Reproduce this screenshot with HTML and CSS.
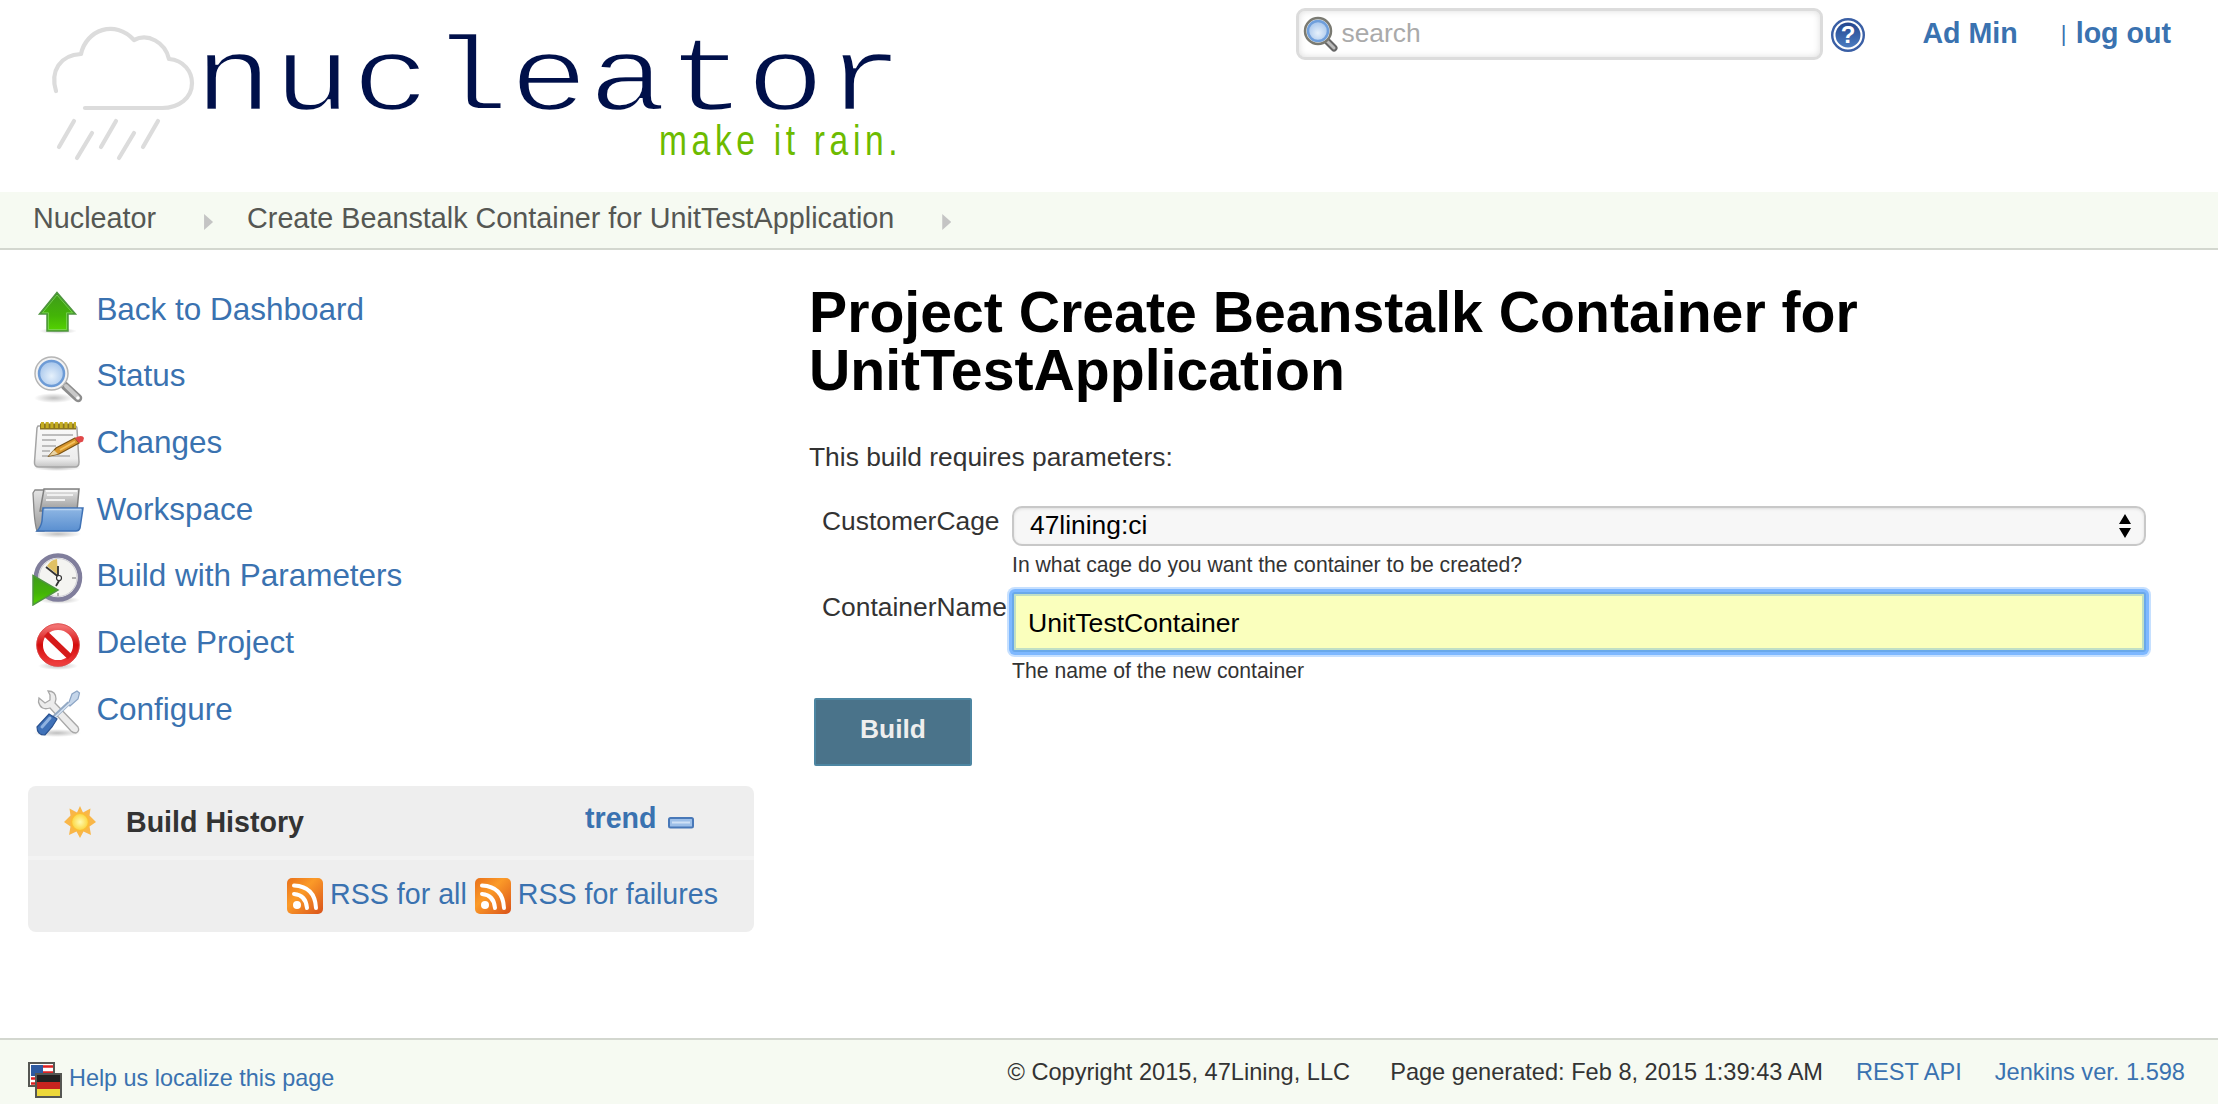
FILE: index.html
```html
<!DOCTYPE html>
<html lang="en">
<head>
<meta charset="utf-8">
<title>Create Beanstalk Container for UnitTestApplication [Nucleator]</title>
<link rel="stylesheet" href="styles.css">
</head>
<body>
<svg class="defs" width="0" height="0" aria-hidden="true">
  <defs>
    <linearGradient id="green" x1="0" y1="0" x2="0" y2="1"><stop offset="0" stop-color="#3f9a1c"/><stop offset=".6" stop-color="#43b407"/><stop offset="1" stop-color="#55d400"/></linearGradient>
    <radialGradient id="lens" cx=".5" cy=".6" r=".6"><stop offset="0" stop-color="#e6f1fc"/><stop offset="1" stop-color="#a3c3ea"/></radialGradient>
    <linearGradient id="paper" x1="0" y1="0" x2="0" y2="1"><stop offset="0" stop-color="#fafafa"/><stop offset=".8" stop-color="#ededed"/><stop offset="1" stop-color="#c4c4c4"/></linearGradient>
    <linearGradient id="folder" x1="0" y1="0" x2="0" y2="1"><stop offset="0" stop-color="#8fb7e4"/><stop offset="1" stop-color="#5a8fd0"/></linearGradient>
    <linearGradient id="grey" x1="0" y1="0" x2="0" y2="1"><stop offset="0" stop-color="#e4e4e4"/><stop offset="1" stop-color="#9a9a9a"/></linearGradient>
    <linearGradient id="red" x1="0" y1="0" x2="0" y2="1"><stop offset="0" stop-color="#f27070"/><stop offset=".5" stop-color="#d40c0c"/><stop offset="1" stop-color="#ee3c3c"/></linearGradient>
    <linearGradient id="rss" x1="0" y1="0" x2="1" y2="1"><stop offset="0" stop-color="#e8701a"/><stop offset=".4" stop-color="#fb9a28"/><stop offset="1" stop-color="#d9521a"/></linearGradient>
    <radialGradient id="sun"><stop offset="0" stop-color="#fffbb0"/><stop offset="1" stop-color="#fbd43c"/></radialGradient>
    <radialGradient id="shade"><stop offset="0" stop-color="#000" stop-opacity=".25"/><stop offset="1" stop-color="#000" stop-opacity="0"/></radialGradient>
    <linearGradient id="blue" x1="0" y1="0" x2="0" y2="1"><stop offset="0" stop-color="#23468f"/><stop offset="1" stop-color="#4b7cc0"/></linearGradient>
    <symbol id="feed" viewBox="0 0 36 36">
      <rect width="36" height="36" rx="5" fill="url(#rss)"/>
      <circle cx="10" cy="27" r="4" fill="#fff"/>
      <path d="M7 16q12 1 13 14M7 7.500q21 1 22 22.500" fill="none" stroke="#fff" stroke-width="4" stroke-linecap="round"/>
    </symbol>
  </defs>
</svg>

<header class="header">
  <svg class="logo" width="920" height="192" viewBox="0 0 920 192">
    <g fill="none" stroke="#dcdcdc" stroke-width="4.200" stroke-linecap="round" stroke-linejoin="round">
      <path d="M56 91C50 71 60 55 81 54C86 30 115 19 134 40C148 33 165 42 169 59C184 60 192 72 192 83C192 98 179 108 162 108H85"/>
      <path d="M74 121L59 147M116 121L101 147M158 121L143 147M92 133L77 158M134 133L119 158"/>
    </g>
    <text class="logo-name" transform="translate(194 110) scale(1.240 1)">nucleator</text>
    <text class="logo-tag" transform="translate(659 155) scale(.780 1)" textLength="306">make it rain.</text>
  </svg>
  <div class="tools">
    <div class="search">
      <svg width="36" height="36" viewBox="0 0 36 36">
        <path d="M23 24l8 8" stroke="#666" stroke-width="7" stroke-linecap="round"/>
        <path d="M24 25l7 7" stroke="#bbb" stroke-width="3" stroke-linecap="round"/>
        <circle cx="15" cy="15" r="13" fill="#e8e8e2" stroke="#7a7a72" stroke-width="2.500"/>
        <circle cx="15" cy="15" r="10" fill="url(#lens)" stroke="#6f9fdc" stroke-width="2.500"/>
      </svg>
      <span>search</span>
    </div>
    <svg class="help" width="34" height="34" viewBox="0 0 34 34">
      <circle cx="17" cy="17" r="15.800" fill="#fff" stroke="#3a5fa5" stroke-width="2.400"/>
      <circle cx="17" cy="17" r="12.500" fill="url(#blue)"/>
      <text class="help-mark" x="17" y="25">?</text>
    </svg>
    <a class="user">Ad Min</a>
    <a class="logout"><span class="bar">|</span> log out</a>
  </div>
</header>

<nav class="crumbs">
  <a class="crumb-home">Nucleator</a>
  <i class="sep"></i>
  <a class="crumb-job">Create Beanstalk Container for UnitTestApplication</a>
  <i class="sep"></i>
</nav>

<div class="page">
  <aside class="side">
    <ul class="tasks">
      <li><svg class="ico" viewBox="0 0 52 54"><ellipse cx="26" cy="46" rx="19" ry="3" fill="url(#shade)"/><path d="M25 7.500L43.500 29H36V46H15V29H7.500Z" fill="url(#green)" stroke="#4f9440" stroke-width="1.500"/><path d="M25 10L40.500 27.800H34.500V44.500H16.500V27.800H10.500Z" fill="none" stroke="#86d968" stroke-width="1" opacity=".7"/></svg><a>Back to Dashboard</a></li>
      <li><svg class="ico" viewBox="0 0 52 54"><ellipse cx="22" cy="46" rx="20" ry="5" fill="url(#shade)"/><path d="M33 34l13 12" stroke="#8d8d8d" stroke-width="8.500" stroke-linecap="round"/><path d="M34 34l11.500 11" stroke="#c9c9c9" stroke-width="4" stroke-linecap="round"/><circle cx="46" cy="46" r="1.800" fill="#fff"/><circle cx="19.500" cy="21.500" r="16.500" fill="#f3f3f3" stroke="#b5b5b5" stroke-width="1.500"/><circle cx="19.500" cy="21.500" r="12.500" fill="url(#lens)" stroke="#6d9bd6" stroke-width="2.500"/></svg><a>Status</a></li>
      <li><svg class="ico" viewBox="0 0 52 54"><ellipse cx="25" cy="49" rx="24" ry="3" fill="url(#shade)"/><path d="M6 7H43Q45 7 45 10L47 43Q47 48 43 48H7Q2 48 2.500 43L5 9Z" fill="url(#paper)" stroke="#a5a5a5" stroke-width="1.500"/><path d="M8 7.500H44" stroke="#8a7420" stroke-width="6"/><path d="M9 6H44" stroke="#c4ad22" stroke-width="6" stroke-dasharray="3 1.700"/><path d="M10 16H41M10 21H24M10 27H24M10 32H18M10 37H38" stroke="#bdbdbd" stroke-width="1.800"/><path d="M17 37L24 29L43 19L47 24L27 35Z" fill="#d9962b" stroke="#7a5314" stroke-width="1.200"/><path d="M17 37L22 31L26 35Z" fill="#e9d3a4"/><path d="M28 31L43 22.500" stroke="#f3c35f" stroke-width="2"/><path d="M43 19L46 17.500Q51 16 52 19L51 22.500L47 24Z" fill="#e14848"/></svg><a>Changes</a></li>
      <li><svg class="ico" viewBox="0 0 52 54"><ellipse cx="26" cy="49" rx="23" ry="4" fill="url(#shade)"/><path d="M1 8L3 5H12V46H5Q3 40 2 26Z" fill="url(#grey)" stroke="#888" stroke-width="1.300"/><path d="M12 4H47L45 26H8Z" fill="url(#grey)" stroke="#808080" stroke-width="1.500"/><path d="M14 6H45" stroke="#fff" stroke-width="1.500"/><path d="M15 10H41M14 15H33" stroke="#f0f0f0" stroke-width="2"/><path d="M11 23H51L48 43Q47 46 44 46H5Q9 42 10 36Z" fill="url(#folder)" stroke="#3f72b5" stroke-width="1.500"/><path d="M12.500 24.500H49" stroke="#b7d3f2" stroke-width="1.500"/></svg><a>Workspace</a></li>
      <li><svg class="ico" viewBox="0 0 52 54"><ellipse cx="27" cy="48" rx="21" ry="4" fill="url(#shade)"/><circle cx="26" cy="25.500" r="22" fill="#f4f4f1" stroke="#807e9c" stroke-width="4.500"/><circle cx="26" cy="25.500" r="19" fill="none" stroke="#cfcfd6" stroke-width="1"/><path d="M26 23L15 14Q19 7.500 25 7Z" fill="#e0c164"/><path d="M14 15L26 24.500L28 27L24 34M26 24V14" fill="none" stroke="#333" stroke-width="1.800"/><circle cx="27" cy="26" r="2.500" fill="#fff" stroke="#333" stroke-width="1.200"/><path d="M40 26h4M26 41v3" stroke="#999" stroke-width="1.500"/><path d="M1 23.500L26 38L1 53Z" fill="url(#green)" stroke="#4f9440" stroke-width="1.500"/></svg><a>Build with Parameters</a></li>
      <li><svg class="ico" viewBox="0 0 52 54"><ellipse cx="26" cy="47" rx="20" ry="4" fill="url(#shade)"/><circle cx="26" cy="26" r="18.300" fill="#fff" stroke="url(#red)" stroke-width="6.500"/><path d="M14 15L38 38" stroke="#d61a1a" stroke-width="6"/><circle cx="26" cy="26" r="21.300" fill="none" stroke="#d84a4a" stroke-width=".8"/></svg><a>Delete Project</a></li>
      <li><svg class="ico" viewBox="0 0 52 54"><ellipse cx="25" cy="48" rx="24" ry="4" fill="url(#shade)"/><path d="M16 6Q24 6 24 14L23 18L46 42Q48 46 44 48Q41 48 39 46L18 23Q9 26 6.500 17L7 13L13 18L18 15L18 10Z" fill="#ececec" stroke="#a8a8a8" stroke-width="1.300"/><path d="M36 20L40 9L45 6L47.500 8L46 14L38 21Z" fill="#c5d6ea" stroke="#8ba4c4" stroke-width="1.200"/><path d="M21 33L37 18" stroke="#93a9c4" stroke-width="4"/><path d="M22 33L38 18" stroke="#d8e4f2" stroke-width="1.500"/><path d="M5 42L17 29L25 34L20 42L13 50Q5 50 5 42Z" fill="#3f71b8" stroke="#2a5290" stroke-width="1.200"/><path d="M10 42L18 33" stroke="#8fb2e0" stroke-width="3" stroke-linecap="round"/></svg><a>Configure</a></li>
    </ul>
    <section class="history">
      <div class="history-head">
        <svg class="sun" width="34" height="34" viewBox="0 0 34 34"><path d="M17 1L20 7.500L27.500 3.500L26.500 10.500L33 17L26.500 21.500L28 30L20.500 26.500L17 33L13.500 26.500L6 30L7.500 21.500L1 17L7.500 10.500L6.500 3.500L14 7.500Z" fill="#f9b648"/><circle cx="17" cy="17" r="8.700" fill="url(#sun)" stroke="#fbbc35" stroke-width="1.600"/></svg>
        <h2>Build History</h2>
        <a class="trend">trend</a>
        <svg class="minus" width="26" height="12" viewBox="0 0 26 12"><rect x="1" y="1" width="24" height="9.500" rx="1.500" fill="#9dbfe8" stroke="#4878b8" stroke-width="2"/><path d="M4 5.500H22" stroke="#cfe1f6" stroke-width="2"/></svg>
      </div>
      <div class="history-feed">
        <svg width="36" height="36"><use href="#feed"/></svg><a class="all">RSS for all</a>
        <svg width="36" height="36"><use href="#feed"/></svg><a>RSS for failures</a>
      </div>
    </section>
  </aside>

  <main class="main">
    <h1>Project Create Beanstalk Container for<br>UnitTestApplication</h1>
    <p class="intro">This build requires parameters:</p>
    <div class="param">
      <label>CustomerCage</label>
      <div class="field">
        <div class="select"><span>47lining:ci</span><svg width="12" height="24" viewBox="0 0 12 24"><path d="M6 0L12 10H0ZM6 24L12 14H0Z"/></svg></div>
        <p class="hint">In what cage do you want the container to be created?</p>
      </div>
    </div>
    <div class="param second">
      <label>ContainerName</label>
      <div class="field">
        <div class="input">UnitTestContainer</div>
        <p class="hint">The name of the new container</p>
      </div>
    </div>
    <button class="build">Build</button>
  </main>
</div>

<footer class="footer">
  <svg class="flags" width="34" height="36" viewBox="0 0 34 36">
    <rect x="1" y="1" width="25" height="23" fill="#fff" stroke="#555753" stroke-width="2"/>
    <path d="M3 4.500H25M3 10.500H25M3 16.500H25M3 21.500H25" stroke="#d22" stroke-width="2.500"/>
    <rect x="3" y="3" width="12" height="11" fill="#2d5aa0"/>
    <rect x="8" y="12" width="25" height="23" fill="#222" stroke="#555753" stroke-width="2"/>
    <rect x="9" y="20" width="23" height="7" fill="#c9241f"/>
    <rect x="9" y="27" width="23" height="7" fill="#edd83a"/>
  </svg>
  <a class="localize">Help us localize this page</a>
  <div class="legal">
    <span>© Copyright 2015, 47Lining, LLC</span>
    <span class="generated">Page generated: Feb 8, 2015 1:39:43 AM</span>
    <a class="api">REST API</a>
    <a>Jenkins ver. 1.598</a>
  </div>
</footer>
</body>
</html>
```
FILE: styles.css
```css
* { box-sizing: border-box; }
body {
  margin: 0;
  height: 1104px;
  display: flex;
  flex-direction: column;
  background: #fff;
  color: #333;
  font-family: "Liberation Sans", Arial, sans-serif;
  font-size: 26.4px;
  white-space: nowrap;
  overflow: hidden;
}
a { color: #3a72b0; text-decoration: none; }
h1, h2, p, ul { margin: 0; padding: 0; }
svg { display: block; flex: none; }
.defs { position: absolute; }

/* Header */
.header { display: flex; justify-content: space-between; height: 192px; flex: none; }
.logo-name { font-family: "Liberation Mono", "Courier New", monospace; font-size: 106px; fill: #00104a; stroke: #fff; stroke-width: 2.500px; }
.logo-tag { font-size: 43px; fill: #6dbb00; }
.tools { display: flex; align-items: flex-start; padding: 8px 47px 0 0; font-size: 28.6px; font-weight: bold; line-height: 50px; }
.search {
  display: flex;
  align-items: center;
  width: 527px;
  height: 52px;
  padding-left: 4px;
  border: 3px solid #dcdcdc;
  border-radius: 9px;
  box-shadow: inset 0 0 7px #ddd;
  color: #aaa;
  font-size: 26.4px;
  font-weight: normal;
}
.search span { line-height: 46px; margin: -2px 0 0 2px; }
.help { margin: 10px 0 0 8px; }
.help-mark { fill: #fff; font-size: 24px; font-weight: bold; text-anchor: middle; }
.user { margin-left: 57px; }
.logout { margin-left: 43px; }
.bar { display: inline-block; font-size: 22px; font-weight: normal; width: 6px; vertical-align: 2px; line-height: 1; margin-right: 1px; }

/* Breadcrumbs */
.crumbs {
  display: flex;
  flex: none;
  height: 58px;
  padding-left: 33px;
  background: #f6faf2;
  border-bottom: 2px solid #d3d7cf;
  font-size: 28.75px;
  line-height: 52px;
}
.crumbs a { color: #555753; }
.sep { width: 9px; height: 16px; margin: 22px 34px 0 48px; background: #c4c4c4; clip-path: polygon(0 0, 100% 50%, 0 100%); }

/* Body columns */
.page { display: flex; flex: 1; }
.side { width: 754px; padding: 26px 0 0 28px; flex: none; }
.tasks { list-style: none; font-size: 31.46px; }
.tasks li { display: flex; align-items: center; height: 66.67px; padding-left: 4px; line-height: 67px; }
.ico { width: 52px; height: 54px; margin: 6px 12.4px 0 0; }
.history { margin-top: 43px; background: #eee; border-radius: 8px; font-size: 28.6px; }
.history-head { display: flex; height: 74px; padding-left: 35px; border-bottom: 4px solid #f3f3f3; line-height: 72px; }
.sun { margin-top: 19px; }
.history h2 { width: 459px; margin-left: 29px; font-size: 28.6px; color: #333; }
.trend { font-weight: bold; line-height: 64px; }
.minus { margin: 31px 0 0 12px; }
.history-feed { display: flex; justify-content: flex-end; height: 72px; padding: 0 36px 0 0; line-height: 68px; }
.history-feed svg { margin: 18px 7px 0 0; }
.history-feed .all { margin-right: 8px; }

/* Main */
.main { flex: 1; padding: 33px 72px 0 55px; }
h1 { color: #000; font-size: 57.2px; line-height: 58px; }
.intro { margin-top: 35px; line-height: 46px; }
.param { display: flex; margin: 26px 0 0 -1px; }
.param label { width: 204px; padding-left: 14px; line-height: 30px; }
.field { flex: 1; min-width: 0; }
.select {
  display: flex;
  align-items: center;
  justify-content: space-between;
  height: 40px;
  padding: 0 13px 0 16px;
  border: 2px solid #c8c8c8;
  border-radius: 10px;
  background: #f7f7f7;
  box-shadow: inset 0 1px 3px #ddd;
  color: #000;
  line-height: 34px;
}
.select span { margin-top: -2px; }
.hint { font-size: 21.2px; line-height: 38px; }
.second { margin-top: 8px; }
.input {
  height: 60px;
  padding-left: 14px;
  border: 2px solid #6aa9ea;
  border-radius: 3px;
  background: #faffbd;
  box-shadow: inset 0 0 0 2px #c0dfc5, 0 0 0 3px #7eb8ff, 0 0 0 5px #c6e0ff;
  color: #000;
  font-size: 26.6px;
  line-height: 58px;
}
.build {
  display: block;
  width: 158px;
  height: 68px;
  margin: 8px 0 0 5px;
  padding: 0 0 6px;
  border: 2px solid #4d86a2;
  border-radius: 2px;
  background: #4a738a;
  color: #eee;
  font: bold 26.4px/58px "Liberation Sans", Arial, sans-serif;
}

/* Footer */
.footer {
  display: flex;
  flex: none;
  height: 66px;
  padding: 0 33px 0 28px;
  background: #f6faf2;
  border-top: 2px solid #d3d7cf;
  font-size: 23.6px;
}
.flags { margin-top: 22px; }
.localize { margin: 0 auto 0 7px; font-size: 23.4px; line-height: 77px; }
.legal { display: flex; line-height: 64px; }
.generated { margin: 0 33px 0 40px; }
.api { margin-right: 33px; }
```
